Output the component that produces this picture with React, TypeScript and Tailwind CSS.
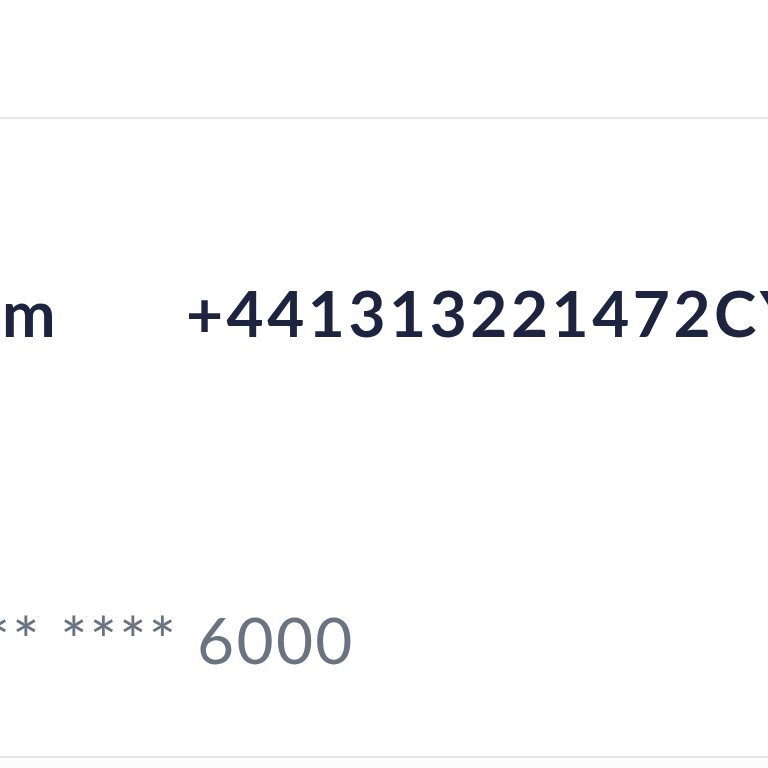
const App = () => {
  return (
    <div className="w-[768px] h-[768px] overflow-hidden bg-white font-['Lato',sans-serif]">
      {/* header space */}
      <div className="h-[117px]" />

      {/* row */}
      <div className="border-t-2 border-b-2 border-[#e5e7eb]">
        <div className="pt-[162px] flex items-center whitespace-nowrap text-[64px] leading-none font-bold tracking-[3.5px] text-[#1e2340]">
          <span className="w-[186px] shrink-0 pl-[2px]">m</span>
          <span>+441313221472CYP</span>
        </div>
        <div className="pt-[263px] pb-[84px] whitespace-nowrap text-[64px] leading-none tracking-[2.3px] text-[#6b7280]">
          <span className="-ml-[213px]">**** **** **** 6000</span>
        </div>
      </div>

      <div className="h-[20px] bg-[#fcfcfc]" />
    </div>
  )
}

export default App
